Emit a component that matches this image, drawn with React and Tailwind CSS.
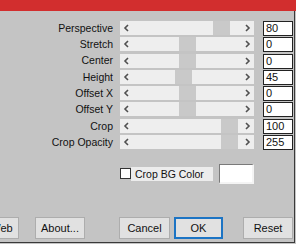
import React from "react";

const rows = [
  { label: "Perspective", value: "80", thumb: 93 },
  { label: "Stretch", value: "0", thumb: 59 },
  { label: "Center", value: "0", thumb: 59 },
  { label: "Height", value: "45", thumb: 55 },
  { label: "Offset X", value: "0", thumb: 59 },
  { label: "Offset Y", value: "0", thumb: 59 },
  { label: "Crop", value: "100", thumb: 101 },
  { label: "Crop Opacity", value: "255", thumb: 101 },
];

function Chevron({ dir }) {
  return (
    <svg width="7" height="8" viewBox="0 0 7 8" className="shrink-0 relative z-10">
      {dir === "left" ? (
        <polyline points="5,1 2,4 5,7" fill="none" stroke="#505050" strokeWidth="1.6" />
      ) : (
        <polyline points="2,1 5,4 2,7" fill="none" stroke="#505050" strokeWidth="1.6" />
      )}
    </svg>
  );
}

function Slider({ thumb }) {
  return (
    <div className="relative w-[134px] h-[14px] bg-[#eeeeee] flex items-center justify-between px-[3px]">
      <Chevron dir="left" />
      <div
        className="absolute top-0 h-[14px] w-[17px] bg-[#c9c9c9]"
        style={{ left: thumb }}
      />
      <Chevron dir="right" />
    </div>
  );
}

function Btn({ children, className = "" }) {
  return (
    <div
      className={
        "absolute top-0 h-[22px] flex items-center justify-center bg-[#e1e1e1] text-[11px] text-[#111] " +
        className
      }
    >
      {children}
    </div>
  );
}

export default function App() {
  return (
    <div
      className="w-[296px] h-[244px] bg-[#c4c4c4] flex flex-col overflow-hidden relative"
      style={{ fontFamily: '"Liberation Sans", Arial, sans-serif' }}
    >
      <div className="h-[11px] bg-[#d22e2e] shrink-0" />
      <div className="flex flex-col pt-[10px]">
        {rows.map((r) => (
          <div key={r.label} className="h-[16.3px] flex items-start">
            <div className="w-[113px] h-[14px] flex items-center justify-end text-[10.5px] leading-none text-[#111]">
              {r.label}
            </div>
            <div className="ml-[7px]">
              <Slider thumb={r.thumb} />
            </div>
            <div className="ml-[9px] w-[30px] h-[15px] bg-white border border-[#222] flex items-center pl-[2px] text-[11px] leading-none text-[#111]">
              {r.value}
            </div>
          </div>
        ))}
      </div>
      <div className="flex items-center mt-[12px] h-[21px]">
        <div className="ml-[120px] w-[11px] h-[11px] bg-white border border-[#333] shrink-0" />
        <div className="w-[82px] h-[14px] bg-[#ececec] flex items-center pl-[4px] text-[10.5px] leading-none text-[#111]">
          Crop BG Color
        </div>
        <div className="ml-[6px] w-[35px] h-[20px] bg-white border-t border-l border-[#7a7a7a] border-r-2 border-b-2 border-r-[#f4f4f4] border-b-[#f4f4f4]" />
      </div>
      <div className="relative mt-[33px] h-[22px]">
        <Btn className="left-[-30px] w-[49px] border border-[#adadad]">
          <span className="pl-[14px]">Web</span>
        </Btn>
        <Btn className="left-[35px] w-[50px] border border-[#adadad]">About...</Btn>
        <Btn className="left-[119px] w-[51px] border border-[#adadad]">Cancel</Btn>
        <Btn className="left-[174px] w-[49px] border-2 border-[#1c74c4]">OK</Btn>
        <Btn className="left-[243px] w-[50px] border border-[#adadad]">Reset</Btn>
      </div>
      <div className="absolute right-[1px] top-[11px] bottom-[1px] w-[1px] bg-[#3a3a3a]" />
      <div className="absolute left-0 right-[1px] bottom-[1px] h-[1px] bg-[#3a3a3a]" />
    </div>
  );
}
